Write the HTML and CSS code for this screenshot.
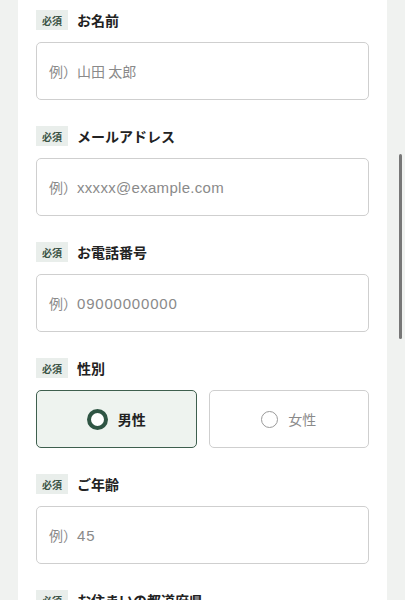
FILE: index.html
```html
<!DOCTYPE html>
<html lang="ja">
<head>
<meta charset="utf-8">
<title>フォーム</title>
<link rel="stylesheet" href="styles.css">
</head>
<body>
<main class="card">
  <div class="field">
    <div class="head"><span class="badge">必須</span><span class="label">お名前</span></div>
    <div class="input"><span class="ph">例）山田 太郎</span></div>
  </div>
  <div class="field">
    <div class="head"><span class="badge">必須</span><span class="label">メールアドレス</span></div>
    <div class="input"><span class="ph">例）<span class="latin">xxxxx@example.com</span></span></div>
  </div>
  <div class="field">
    <div class="head"><span class="badge">必須</span><span class="label">お電話番号</span></div>
    <div class="input"><span class="ph">例）<span class="latin digits">09000000000</span></span></div>
  </div>
  <div class="field">
    <div class="head"><span class="badge">必須</span><span class="label">性別</span></div>
    <div class="choices">
      <div class="choice selected"><span class="radio"></span><span class="choice-text">男性</span></div>
      <div class="choice"><span class="radio"></span><span class="choice-text">女性</span></div>
    </div>
  </div>
  <div class="field">
    <div class="head"><span class="badge">必須</span><span class="label">ご年齢</span></div>
    <div class="input"><span class="ph">例）<span class="latin digits">45</span></span></div>
  </div>
  <div class="field">
    <div class="head"><span class="badge">必須</span><span class="label">お住まいの都道府県</span></div>
    <div class="input"><span class="ph">選択してください</span></div>
  </div>
</main>
<div class="scrollbar"></div>
</body>
</html>
```

FILE: styles.css
```css
html, body {
  margin: 0;
  padding: 0;
  height: 100%;
  overflow: hidden;
}
body {
  background: #f0f2f0;
  font-family: "Noto Sans CJK JP", "Noto Sans", "Liberation Sans", sans-serif;
  color: #222;
}
.card {
  background: #ffffff;
  margin: 0 18px;
  padding: 10px 18px 40px;
  display: flex;
  flex-direction: column;
  gap: 26px;
}
.field {
  display: flex;
  flex-direction: column;
  gap: 12px;
}
.head {
  display: flex;
  align-items: center;
  gap: 9px;
  height: 20px;
}
.badge {
  display: inline-flex;
  align-items: center;
  justify-content: center;
  width: 32px;
  height: 20px;
  background: #e9eeeb;
  color: #3b5446;
  font-size: 10px;
  font-weight: 700;
}
.label {
  font-size: 14px;
  font-weight: 700;
  color: #222;
}
.input {
  box-sizing: border-box;
  height: 58px;
  border: 1px solid #cfcfcf;
  border-radius: 5px;
  display: flex;
  align-items: center;
  padding-left: 12px;
  background: #fff;
}
.ph {
  font-size: 14px;
  color: #8a8a8a;
}
.latin {
  font-family: "Liberation Sans", "Noto Sans", sans-serif;
  font-size: 15px;
  letter-spacing: 0.3px;
}
.latin.digits {
  letter-spacing: 0.8px;
}
.choices {
  display: grid;
  grid-template-columns: 1fr 1fr;
  gap: 12px;
}
.choice {
  box-sizing: border-box;
  height: 58px;
  border: 1px solid #cfcfcf;
  border-radius: 5px;
  display: flex;
  align-items: center;
  justify-content: center;
  gap: 10px;
  background: #fff;
}
.choice .radio {
  box-sizing: border-box;
  width: 17px;
  height: 17px;
  border: 1px solid #9a9a9a;
  border-radius: 50%;
}
.choice-text {
  font-size: 14px;
  color: #8a8a8a;
}
.choice.selected {
  background: #eef3ef;
  border-color: #3e5f4e;
}
.choice.selected .radio {
  width: 21px;
  height: 21px;
  border: 4px solid #2f5544;
  background: #fff;
}
.choice.selected .choice-text {
  color: #222;
  font-weight: 700;
}
.scrollbar {
  position: fixed;
  top: 154px;
  right: 3px;
  width: 3px;
  height: 185px;
  border-radius: 2px;
  background: #777;
}
```
